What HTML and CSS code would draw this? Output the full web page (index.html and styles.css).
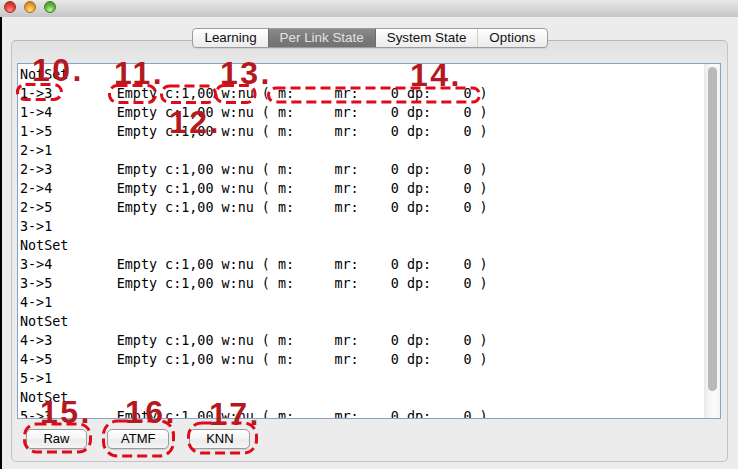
FILE: index.html
```html
<!DOCTYPE html>
<html>
<head>
<meta charset="utf-8">
<title>Per Link State</title>
<link rel="stylesheet" href="styles.css">
</head>
<body>
<div class="titlebar">
  <span class="light red"></span>
  <span class="light yellow"></span>
  <span class="light green"></span>
</div>
<div class="content">
  <div class="tabs">
    <div class="tabgroup">
      <div class="tab">Learning</div>
      <div class="tab selected">Per Link State</div>
      <div class="tab after-selected">System State</div>
      <div class="tab">Options</div>
    </div>
  </div>
  <div class="panel">
    <div class="textarea">
<pre class="log">NotSet
1->3        Empty c:1,00 w:nu ( m:     mr:    0 dp:    0 )
1->4        Empty c:1,00 w:nu ( m:     mr:    0 dp:    0 )
1->5        Empty c:1,00 w:nu ( m:     mr:    0 dp:    0 )
2->1
2->3        Empty c:1,00 w:nu ( m:     mr:    0 dp:    0 )
2->4        Empty c:1,00 w:nu ( m:     mr:    0 dp:    0 )
2->5        Empty c:1,00 w:nu ( m:     mr:    0 dp:    0 )
3->1
NotSet
3->4        Empty c:1,00 w:nu ( m:     mr:    0 dp:    0 )
3->5        Empty c:1,00 w:nu ( m:     mr:    0 dp:    0 )
4->1
NotSet
4->3        Empty c:1,00 w:nu ( m:     mr:    0 dp:    0 )
4->5        Empty c:1,00 w:nu ( m:     mr:    0 dp:    0 )
5->1
NotSet
5->3        Empty c:1,00 w:nu ( m:     mr:    0 dp:    0 )
5->4        Empty c:1,00 w:nu ( m:     mr:    0 dp:    0 )</pre>
      <div class="scrollbar"><div class="thumb"></div></div>
    </div>
    <div class="buttons">
      <button class="btn">Raw</button>
      <button class="btn">ATMF</button>
      <button class="btn">KNN</button>
    </div>
  </div>
</div>

<svg class="marks" width="738" height="469" viewBox="0 0 738 469">
  <g fill="none" stroke="#df0a1a" stroke-width="3" stroke-dasharray="10 5">
    <rect x="17.5" y="84.5" width="44" height="15" rx="8"/>
    <rect x="109.5" y="85.5" width="46" height="17" rx="8"/>
    <rect x="161.5" y="86" width="54" height="16.5" rx="8"/>
    <rect x="216" y="85.5" width="39" height="17" rx="8"/>
    <rect x="268.5" y="88" width="211" height="14" rx="7"/>
    <rect x="24.5" y="424" width="66" height="28" rx="12"/>
    <rect x="103.5" y="421" width="70" height="35" rx="14"/>
    <rect x="188.5" y="423" width="68" height="30" rx="13"/>
  </g>
</svg>
<div class="num n10">10.</div>
<div class="num n11">11.</div>
<div class="num n12">12.</div>
<div class="num n13">13.</div>
<div class="num n14">14.</div>
<div class="num n15">15.</div>
<div class="num n16">16.</div>
<div class="num n17">17.</div>
</body>
</html>
```
FILE: styles.css
```css
html, body {
  margin: 0;
  padding: 0;
}
body {
  width: 738px;
  height: 469px;
  overflow: hidden;
  position: relative;
  background: #ececec;
  font-family: "Liberation Sans", Arial, sans-serif;
}

.titlebar {
  height: 17px;
  box-sizing: border-box;
  padding: 1px 0 0 4px;
  display: flex;
  gap: 8px;
  background: linear-gradient(#e8e8e8, #c6c6c6);
}
.light {
  width: 12px;
  height: 12px;
  box-sizing: border-box;
  border-radius: 50%;
}
.light.red {
  background: radial-gradient(circle at 50% 80%, #ff9c8c 0, #e8453b 45%, #b3231b 100%);
  border: 1px solid #9a2f28;
}
.light.yellow {
  background: radial-gradient(circle at 50% 80%, #ffe28a 0, #f2a631 45%, #b9711a 100%);
  border: 1px solid #a2701f;
}
.light.green {
  background: radial-gradient(circle at 50% 80%, #c8f5a0 0, #69bd45 45%, #3c8a24 100%);
  border: 1px solid #3f7e2a;
}

.content {
  height: 452px;
  box-sizing: border-box;
  border-left: 2px solid #000;
  display: flex;
  flex-direction: column;
}

.tabs {
  display: flex;
  justify-content: center;
  margin-top: 11px;
  position: relative;
  z-index: 1;
}
.tabgroup {
  display: flex;
  height: 20px;
  box-sizing: border-box;
  border: 1px solid #9c9c9c;
  border-radius: 4px;
  overflow: hidden;
  background: linear-gradient(#ffffff, #f3f3f3 60%, #ececec);
  box-shadow: 0 1px 1px rgba(0, 0, 0, 0.08);
}
.tab {
  padding: 0 11px;
  line-height: 18px;
  font-size: 13.4px;
  color: #111;
  white-space: nowrap;
}
.tab + .tab {
  border-left: 1px solid #cfcfcf;
}
.tab.selected {
  background: linear-gradient(#8b8b8b, #7a7a7a 50%, #727272);
  color: #e2e2e2;
  border-left-color: #6d6d6d;
}
.tab.after-selected {
  border-left-color: #6d6d6d;
}

.panel {
  margin: -8px 10px 0 9px;
  height: 422px;
  box-sizing: border-box;
  border: 1px solid #c3c3c3;
  border-top-color: #b8b8b8;
  border-radius: 5px;
  background: linear-gradient(#e1e1e1, #e7e7e7 20px, #ebebeb 40px, #ececec);
  padding: 22px 6px 0 5px;
  display: flex;
  flex-direction: column;
}

.textarea {
  height: 356px;
  box-sizing: border-box;
  border: 1px solid #86a4ca;
  background: #fff;
  display: flex;
}
.log {
  flex: 1;
  margin: 0;
  padding: 1px 0 0 2px;
  overflow: hidden;
  font-family: "DejaVu Sans Mono", Menlo, monospace;
  font-size: 13.4px;
  line-height: 19px;
  color: #000;
  white-space: pre;
}
.scrollbar {
  width: 16px;
  flex: none;
  background: linear-gradient(to right, #e9e9e9, #f6f6f6 30%, #fbfbfb 70%, #f3f3f3);
  display: flex;
  justify-content: center;
}
.thumb {
  width: 9px;
  height: 324px;
  margin-top: 3px;
  border-radius: 5px;
  background: #b9b9b9;
}

.buttons {
  display: flex;
  gap: 20px;
  margin: 10px 0 0 9px;
}
.btn {
  height: 20px;
  min-width: 61px;
  box-sizing: border-box;
  padding: 0 13px;
  margin: 0;
  font-family: "Liberation Sans", Arial, sans-serif;
  font-size: 13px;
  line-height: 18px;
  color: #000;
  border: 1px solid #9b9b9b;
  border-radius: 5px;
  background: linear-gradient(#ffffff, #f5f5f5 45%, #ebebeb 55%, #f4f4f4);
  box-shadow: 0 1px 1px rgba(0, 0, 0, 0.12);
}

.marks {
  position: absolute;
  left: 0;
  top: 0;
  pointer-events: none;
}
.num {
  position: absolute;
  font-family: "Liberation Sans", Arial, sans-serif;
  font-weight: bold;
  font-size: 32px;
  line-height: 1;
  letter-spacing: 2.5px;
  color: #b3191f;
  white-space: nowrap;
}
.n10 { left: 32px; top: 54px; }
.n11 { left: 114px; top: 57px; }
.n12 { left: 169px; top: 106px; }
.n13 { left: 220px; top: 57px; }
.n14 { left: 410px; top: 59px; }
.n15 { left: 40px; top: 396px; }
.n16 { left: 125px; top: 396px; }
.n17 { left: 209px; top: 398px; }
```
